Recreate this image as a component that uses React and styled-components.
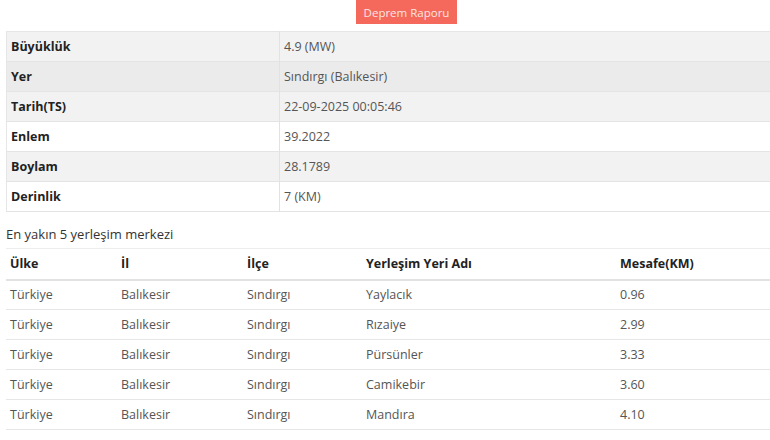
import React from 'react'
import styled, { createGlobalStyle } from 'styled-components'

const GlobalStyle = createGlobalStyle`
    body {
        margin: 0;
        background: #ffffff;
        font-family: 'Open Sans', 'Noto Sans', sans-serif;
        font-size: 12.5px;
        color: #555;
        overflow: hidden;
    }
`;

const Page = styled.div`
    padding-left: 6px;
    width: 764px;
    overflow: hidden;
`;

const ButtonRow = styled.div`
    display: flex;
    padding-left: 350px;
    height: 31px;
`;

const ReportBtn = styled.button`
    background-color: #f4695c;
    color: #fde6e2;
    border: none;
    width: 101px;
    height: 24px;
    font-family: 'Open Sans', sans-serif;
    font-size: 11.5px;
    padding: 0;
    cursor: pointer;
`;

const InfoTable = styled.table`
    width: 790px;
    border-collapse: collapse;
    border: 1px solid #e6e6e6;
`;

const InfoRow = styled.tr`
    background-color: ${p => p.$bg};
    height: 30px;
    border-bottom: 1px solid #e4e4e4;
`;

const LabelCell = styled.td`
    width: 264px;
    padding: 0 4px;
    font-weight: 700;
    color: #222;
    border-right: 1px solid #e2e2e2;
`;

const ValueCell = styled.td`
    padding: 0 4px;
    color: #555;
`;

const SectionTitle = styled.div`
    height: 36px;
    display: flex;
    align-items: center;
    padding-top: 8px;
    box-sizing: border-box;
    color: #333;
    font-size: 13px;
`;

const PlaceTable = styled.table`
    width: 790px;
    border-collapse: collapse;
    table-layout: fixed;
`;

const HeadCell = styled.th`
    box-sizing: border-box;
    text-align: left;
    font-weight: 700;
    color: #222;
    height: 31px;
    padding: 0 4px;
    border-top: 1px solid #ececec;
    border-bottom: 2px solid #e2e2e2;
    width: ${p => p.$w || 'auto'};
`;

const PlaceRow = styled.tr`
    height: 30px;
    border-bottom: 1px solid #e6e6e6;
`;

const PlaceCell = styled.td`
    padding: 0 4px;
    color: #555;
`;

const info = [
    ['Büyüklük', '4.9 (MW)', '#f2f2f2'],
    ['Yer', 'Sındırgı (Balıkesir)', '#ebebeb'],
    ['Tarih(TS)', '22-09-2025 00:05:46', '#f2f2f2'],
    ['Enlem', '39.2022', '#ffffff'],
    ['Boylam', '28.1789', '#f2f2f2'],
    ['Derinlik', '7 (KM)', '#ffffff'],
];

const places = [
    ['Yaylacık', '0.96'],
    ['Rızaiye', '2.99'],
    ['Pürsünler', '3.33'],
    ['Camikebir', '3.60'],
    ['Mandıra', '4.10'],
];

const App = () => {
    return (
        <Page>
            <GlobalStyle />
            <ButtonRow>
                <ReportBtn>Deprem Raporu</ReportBtn>
            </ButtonRow>
            <InfoTable>
                <tbody>
                    {info.map(([label, value, bg]) => (
                        <InfoRow key={label} $bg={bg}>
                            <LabelCell>{label}</LabelCell>
                            <ValueCell>{value}</ValueCell>
                        </InfoRow>
                    ))}
                </tbody>
            </InfoTable>
            <SectionTitle>En yakın 5 yerleşim merkezi</SectionTitle>
            <PlaceTable>
                <thead>
                    <tr>
                        <HeadCell $w="111px">Ülke</HeadCell>
                        <HeadCell $w="126px">İl</HeadCell>
                        <HeadCell $w="119px">İlçe</HeadCell>
                        <HeadCell $w="254px">Yerleşim Yeri Adı</HeadCell>
                        <HeadCell>Mesafe(KM)</HeadCell>
                    </tr>
                </thead>
                <tbody>
                    {places.map(([name, km]) => (
                        <PlaceRow key={name}>
                            <PlaceCell>Türkiye</PlaceCell>
                            <PlaceCell>Balıkesir</PlaceCell>
                            <PlaceCell>Sındırgı</PlaceCell>
                            <PlaceCell>{name}</PlaceCell>
                            <PlaceCell>{km}</PlaceCell>
                        </PlaceRow>
                    ))}
                </tbody>
            </PlaceTable>
        </Page>
    )
}

export default App
